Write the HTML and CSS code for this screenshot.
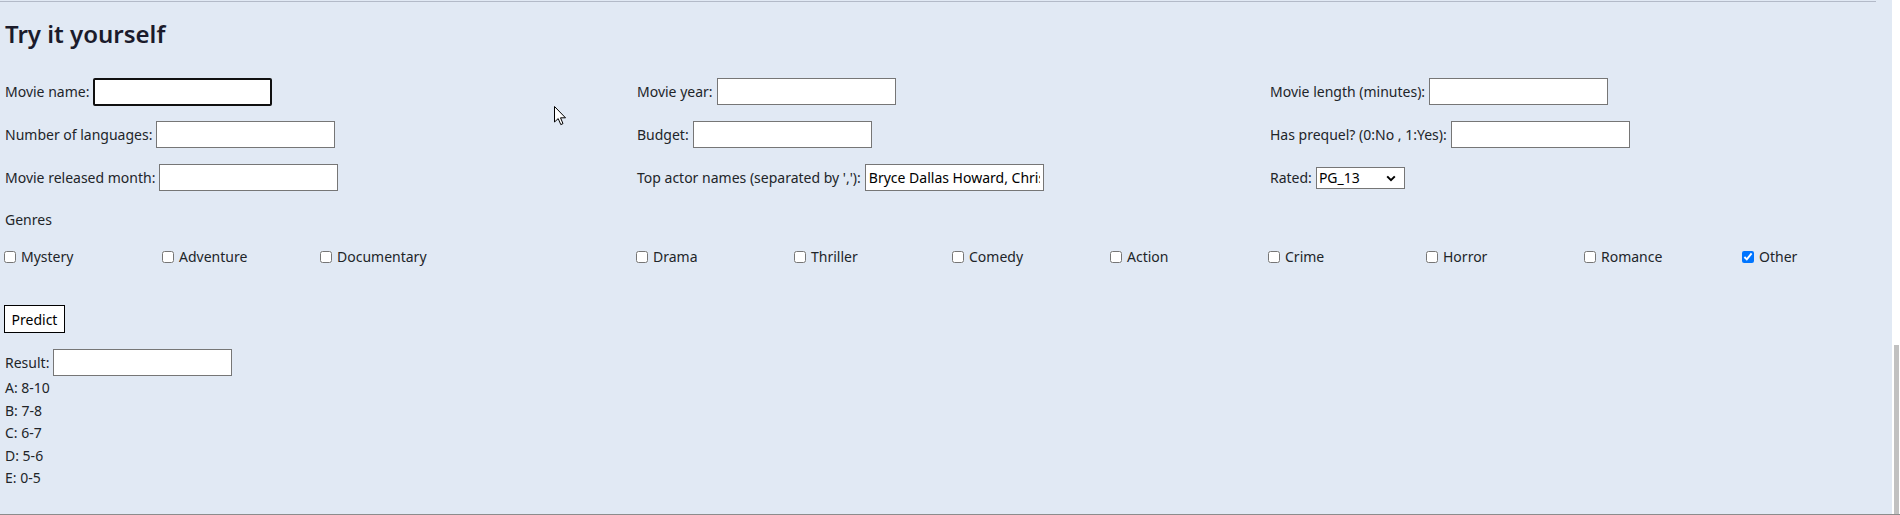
FILE: index.html
```html
<!DOCTYPE html>
<html lang="en">
<head>
<meta charset="utf-8">
<title>Try it yourself</title>
<link rel="stylesheet" href="styles.css">
</head>
<body>
<div class="frame">
  <main class="page">
    <div class="topline"></div>
    <h2 class="title">Try it yourself</h2>

    <div class="fields">
      <div class="field"><label>Movie name:</label><input class="text focused" type="text"></div>
      <div class="field"><label>Movie year:</label><input class="text" type="text"></div>
      <div class="field"><label>Movie length (minutes):</label><input class="text" type="text"></div>

      <div class="field"><label>Number of languages:</label><input class="text" type="text"></div>
      <div class="field"><label>Budget:</label><input class="text" type="text"></div>
      <div class="field"><label>Has prequel? (0:No , 1:Yes):</label><input class="text" type="text"></div>

      <div class="field"><label>Movie released month:</label><input class="text" type="text"></div>
      <div class="field"><label>Top actor names (separated by ','):</label><input class="text" type="text" value="Bryce Dallas Howard, Chris Pratt"></div>
      <div class="field"><label>Rated:</label>
        <span class="select-wrap">
          <select class="select"><option>PG_13</option></select>
          <svg class="chev" width="10" height="7" viewBox="0 0 10 7"><path d="M1.2 1.4 L5 5.2 L8.8 1.4" fill="none" stroke="#000" stroke-width="2"/></svg>
        </span>
      </div>
    </div>

    <div class="genres-title">Genres</div>
    <div class="genres">
      <label class="genre"><input type="checkbox">Mystery</label>
      <label class="genre"><input type="checkbox">Adventure</label>
      <label class="genre"><input type="checkbox">Documentary</label>
      <span class="genre"></span>
      <label class="genre"><input type="checkbox">Drama</label>
      <label class="genre"><input type="checkbox">Thriller</label>
      <label class="genre"><input type="checkbox">Comedy</label>
      <label class="genre"><input type="checkbox">Action</label>
      <label class="genre"><input type="checkbox">Crime</label>
      <label class="genre"><input type="checkbox">Horror</label>
      <label class="genre"><input type="checkbox">Romance</label>
      <label class="genre"><input type="checkbox" checked>Other</label>
    </div>

    <button class="predict" type="button">Predict</button>

    <div class="result"><label>Result:</label><input class="text" type="text"></div>
    <div class="legend">
      <div>A: 8-10</div>
      <div>B: 7-8</div>
      <div>C: 6-7</div>
      <div>D: 5-6</div>
      <div>E: 0-5</div>
    </div>

    <svg class="cursor" width="13" height="20" viewBox="0 0 13 20"><path d="M0.5 0.5 L0.5 16 L4.2 12.6 L6.8 18.6 L9 17.6 L6.5 11.8 L11.5 11.8 Z" fill="#fff" stroke="#000" stroke-width="1" stroke-linejoin="round"/></svg>
  </main>
  <div class="scrollbar"><div class="thumb"></div></div>
</div>
</body>
</html>
```

FILE: styles.css
```css
html, body {
  margin: 0;
  padding: 0;
  overflow: hidden;
}

body {
  width: 1900px;
  height: 515px;
  font-family: "Noto Sans", "Open Sans", sans-serif;
  font-size: 14px;
  color: #212529;
  background: #ffffff;
}

.frame {
  display: flex;
  height: 514px;
  border-bottom: 1px solid #8c8c8c;
}

.page {
  position: relative;
  width: 1892px;
  height: 514px;
  background: #e1e9f4;
  padding-left: 5px;
  box-sizing: border-box;
}

.topline {
  width: 1876px;
  height: 1px;
  margin: 1px 0 0 -5px;
  background: #b3bac8;
}

.title {
  margin: 16px 0 0;
  font-size: 24px;
  line-height: 32px;
  font-weight: 600;
  color: #1b1b2b;
}

.fields {
  display: grid;
  grid-template-columns: 632px 633px 632px;
  grid-auto-rows: 43px;
  align-items: center;
  margin-top: 20px;
}

.field {
  display: flex;
  align-items: center;
  gap: 4px;
  line-height: 20px;
}

.text {
  box-sizing: border-box;
  width: 179px;
  height: 27px;
  margin: 0;
  padding: 0 3px;
  border: 1px solid #767676;
  border-radius: 0;
  background: #ffffff;
  font-family: "Noto Sans", "Open Sans", sans-serif;
  font-size: 14px;
  color: #000;
  outline: none;
}

.text.focused {
  height: 28px;
  border: 2px solid #101010;
  border-radius: 2px;
}

.select-wrap {
  position: relative;
  display: inline-flex;
}

.select {
  appearance: none;
  -webkit-appearance: none;
  box-sizing: border-box;
  width: 89px;
  height: 22px;
  margin: 0;
  padding: 0 0 0 2px;
  border: 1px solid #767676;
  border-radius: 0;
  background: #ffffff;
  font-family: "Noto Sans", "Open Sans", sans-serif;
  font-size: 14px;
  color: #000;
}

.chev {
  position: absolute;
  right: 9px;
  top: 8px;
  pointer-events: none;
}

.genres-title {
  margin-top: 11px;
  line-height: 20px;
}

.genres {
  display: grid;
  grid-template-columns: repeat(12, 158px);
  margin-top: 17px;
  line-height: 20px;
}

.genre {
  display: flex;
  align-items: center;
  gap: 5px;
}

.genre input {
  width: 12px;
  height: 12px;
  margin: 0 0 0 -1px;
  accent-color: #0075ff;
}

.predict {
  display: block;
  box-sizing: border-box;
  margin: 38px 0 0 -1px;
  width: 61px;
  height: 28px;
  padding: 0;
  border: 1px solid #000;
  border-radius: 0;
  background: #ffffff;
  font-family: "Noto Sans", "Open Sans", sans-serif;
  font-size: 14px;
  color: #000;
}

.result {
  display: flex;
  align-items: center;
  gap: 4px;
  height: 28px;
  margin-top: 15px;
}

.legend {
  line-height: 22.5px;
  margin-top: 1px;
}

.cursor {
  position: absolute;
  left: 554px;
  top: 106px;
}

.scrollbar {
  position: relative;
  width: 8px;
  height: 514px;
  background: #ffffff;
}

.thumb {
  position: absolute;
  left: 2px;
  right: 1px;
  top: 345px;
  bottom: 0;
  background: #c1c1c1;
}
```
